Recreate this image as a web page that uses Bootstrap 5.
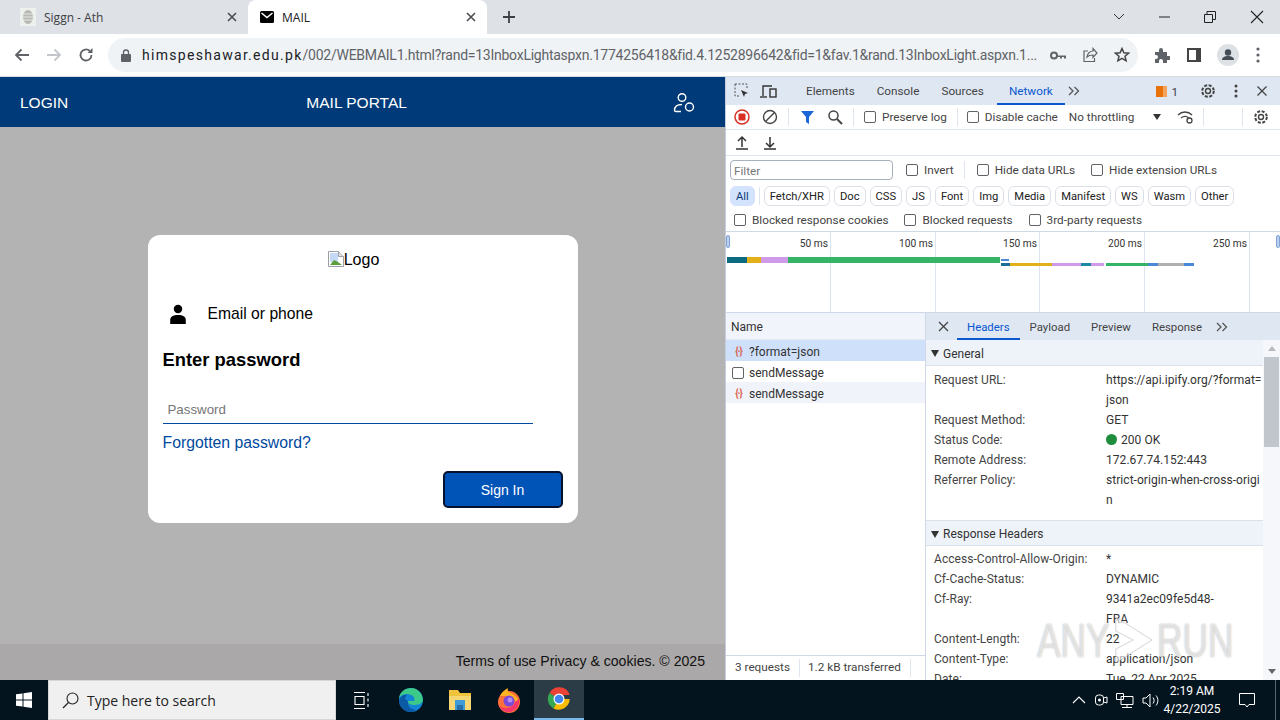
<!DOCTYPE html>
<html lang="en">
<head>
  <meta charset="UTF-8" />
  <meta name="viewport" content="width=device-width, initial-scale=1.0" />
  <title>MAIL</title>
  <link href="https://cdn.jsdelivr.net/npm/bootstrap@5.3.0/dist/css/bootstrap.min.css" rel="stylesheet" />
  <style>
    html, body { height: 720px; overflow: hidden; }
    body { font-family: Roboto, "Liberation Sans", sans-serif; font-size: 11.750px; color: #303942; background: #fff; }
    svg { display: block; flex: none; }
    .ml9 { margin-left: 9px; }
    .ml10 { margin-left: 10px; }
    .ml12 { margin-left: 12px; }
    .ml13 { margin-left: 13px; }
    .ml19 { margin-left: 19px; }
    .lb { margin-left: 6px; padding-top: 2px; }
    .lb-far { margin-left: 11px; padding-top: 2px; }

    /* browser chrome */
    .tabstrip { height: 34px; background: #dee1e6; }
    .br-tab { width: 248px; height: 34px; padding: 0 10px 0 20px; font: 12px "Open Sans", sans-serif; color: #3c4043; flex: none; }
    .br-tab-on { width: 239px; padding-left: 12px; background: #fff; border-radius: 8px 8px 0 0; color: #202124; }
    .plus-ic { margin-left: 15px; }
    .win-btns { width: 167px; padding-right: 16px; }
    .toolbar { height: 43px; background: #fff; border-bottom: 1px solid #dadce0; padding-left: 14px; }
    .omnibox { width: 1030px; height: 34px; margin-left: 14px; background: #f0f3f6; border-radius: 17px; padding: 0 4px 0 13px; font-size: 14px; color: #5f6368; white-space: nowrap; overflow: hidden; }
    .url-host { color: #202124; letter-spacing: 1.300px; }
    .url-text { width: 896px; margin-left: 11px; overflow: hidden; letter-spacing: -.25px; }
    .tool-gap { margin-left: 17px; }

    .work { height: 603px; }

    /* mail page */
    .mailpane { width: 725px; font-family: "Liberation Sans", Arial, sans-serif; background: #b3b3b3; flex: none; }
    .mailhead { height: 50px; background: #003a78; color: #fff; padding: 2px 30px 0 20px; font-size: 15.500px; }
    .mail-title { margin-right: 28px; }
    .mailmain { height: 517px; padding-top: 108px; }
    .logincard { width: 430px; height: 288px; background: #fff; border-radius: 12px; padding: 12px 15px 0; color: #000; }
    .logo-line { height: 24px; font-size: 16px; line-height: 26px; padding-right: 18px; }
    .who { margin-top: 31px; height: 24px; padding-left: 6px; font-size: 15.700px; }
    .who span { margin-left: 21px; }
    .enter-pw { font-size: 18.400px; font-weight: 700; margin: 22px 0 0; line-height: 24px; }
    .pw-input { display: block; width: 370px; height: 30px; margin-top: 22px; padding: 2px 5px 0; border: 0; border-bottom: 1px solid #004a9f; font: 13.300px "Liberation Sans", Arial, sans-serif; outline: 0; }
    .pw-input::placeholder { color: #757575; opacity: 1; }
    .forgot { display: block; margin-top: 10px; font-size: 15.800px; line-height: 18px; color: #004a9f; text-decoration: none; }
    .signin { width: 120px; height: 37px; margin-top: 19px; background: #0054b8; color: #fff; border: 2px solid #04122e; border-radius: 5px; font-size: 14px; padding: 2px 0 0; }
    .mailfoot { height: 36px; background: #aaa8a8; color: #111; font-size: 14.100px; padding-right: 20px; }

    /* devtools */
    .devpane { width: 555px; border-left: 1px solid #c4cede; background: #fff; position: relative; overflow: hidden; }
    .dt-tabs { height: 28px; background: #dfe7f3; color: #444; padding-left: 8px; }
    .dt-elements { margin-left: 29px; }
    .dt-tab { height: 28px; line-height: 29px; margin-right: 22px; }
    .dt-tab-on { color: #0b57d0; border-bottom: 2px solid #0b57d0; margin: 0 3px 0 -9px; padding: 0 12px; }
    .warn-count { margin: 3px 22px 0 4px; }
    .dt-gap { margin-right: 18px; }
    .x-end { margin-right: 12px; }
    .dt-row { height: 25px; border-bottom: 1px solid #dfe5ef; padding-left: 8px; color: #444; white-space: nowrap; }
    .dt-row-b { height: 26px; }
    .dt-sep { width: 1px; height: 18px; background: #dfe5ef; flex: none; }
    .sep-last { margin-left: 38px; }
    .chk { width: 12px; height: 12px; border: 1px solid #5f6368; border-radius: 2px; background: #fff; flex: none; }
    .filter-row { height: 27px; padding-left: 4px; color: #444; }
    .filter-box { width: 163px; height: 20px; border: 1px solid #a8b0bd; border-radius: 4px; padding-left: 3px; line-height: 20px; color: #777; }
    .chip-row { height: 25px; padding-left: 4px; }
    .chip-sep { margin: 0 4px; }
    .chip { height: 20px; line-height: 19px; padding: 0 5px; border: 1px solid #dbe0e8; border-radius: 6px; font-size: 11.200px; color: #222; margin-right: 4px; }
    .chip-on { background: #d3e3fd; border-color: #d3e3fd; color: #0b3a75; margin-right: 0; }
    .block-row { height: 24px; padding-left: 8px; border-bottom: 1px solid #cfd8e6; color: #444; }
    .overview { height: 81px; border-bottom: 1px solid #cfd8e6; position: relative; }
    .tick { position: absolute; top: 0; bottom: 0; width: 1px; background: #dde4ef; }
    .tick span { position: absolute; right: 3px; top: 4px; font-size: 10.200px; white-space: nowrap; color: #333; }
    .grip { position: absolute; top: 3px; width: 4px; height: 13px; background: #bcd0ee; border: 1px solid #7fa2d8; border-radius: 2px; }
    .wf { position: absolute; left: 1px; display: flex; }
    .wf i { display: block; height: 100%; }
    .wf1 { top: 25px; height: 6px; }
    .wf2 { top: 31px; left: 275px; height: 3px; }
    .wf3 { top: 27px; left: 275px; height: 2px; }

    .netgrid { height: 367px; font-size: 12px; }
    .namecol { width: 200px; border-right: 1px solid #cfd8e6; flex: none; }
    .namehead { height: 27px; background: #f1f4fa; padding: 2px 0 0 5px; border-bottom: 1px solid #e3e8f1; color: #333; }
    .namerow { height: 21px; padding: 2px 0 0 6px; gap: 4px; color: #333; }
    .namerow-sel { background: #cfe0fb; }
    .namerow-alt { background: #f0f4fa; }
    .statusbar { height: 25px; border-top: 1px solid #cfd8e6; padding-left: 9px; color: #444; white-space: nowrap; margin-top: auto; font-size: 11.750px; }
    .statusbar .dt-sep { margin: 0 8px 0 9px; }
    .jsonic { color: #d9634c; font-size: 10px; font-weight: 700; width: 13px; text-align: center; line-height: 1; letter-spacing: -1px; }
    .docic { width: 12px; height: 12px; border: 1px solid #5f6368; border-radius: 2px; margin-right: 1px; }

    .detail { width: 354px; overflow: hidden; }
    .det-tabs { height: 27px; background: #dfe7f3; color: #444; padding-left: 12px; font-size: 11.400px; }
    .det-on { margin: 0 10px 0 8px; padding: 0 10px; height: 27px; }
    .det-tab { line-height: 29px; height: 27px; margin-right: 21px; }
    .det-last { margin-right: 14px; }
    .det-body { width: 337px; height: 340px; overflow: hidden; flex: none; }
    .det-scroll { width: 17px; height: 340px; background: #f5f7fb; position: relative; flex: none; }
    .thumb { position: absolute; top: 17px; left: 1px; right: 1px; height: 90px; background: #c1c6cd; }
    .arrow-up { position: absolute; top: 6px; left: 5px; }
    .arrow-dn { position: absolute; bottom: 6px; left: 5px; }
    .sect { height: 26px; background: #eef2f9; border-bottom: 1px solid #d9e0ec; padding: 2px 0 0 5px; gap: 4px; color: #333; }
    .sect-r { border-top: 1px solid #d9e0ec; margin-top: 10px; }
    .kv { padding: 4px 0 0 8px; }
    .kv-b { padding-top: 3px; }
    .kv-row { display: flex; line-height: 20px; letter-spacing: .05px; }
    .kv-row b { font-weight: 400; width: 172px; flex: none; color: #444; }
    .kv-row span { white-space: nowrap; color: #333; }
    .dot { display: inline-block; width: 11px; height: 11px; border-radius: 50%; background: #1e8e3e; margin-right: 4px; vertical-align: -1px; }

    .watermark { position: absolute; left: 311px; top: 540px; display: flex; align-items: center; height: 46px; color: rgba(255,255,255,.6); font: 49px/46px "Liberation Sans", Arial, sans-serif; text-shadow: 0 0 2px rgba(110,110,110,.55); white-space: nowrap; transform: scaleX(.72); transform-origin: left; }

    /* taskbar */
    .taskbar { height: 40px; background: #04141f; color: #fff; }
    .startbtn { width: 48px; }
    .searchbox { width: 288px; height: 40px; background: #f0f0f0; color: #222; font: 14px "Open Sans", sans-serif; padding-left: 13px; gap: 8px; border: 1px solid #d6d6d6; }
    .tb-ic { width: 50px; height: 40px; flex: none; }
    .tb-narrow { width: 48px; }
    .tb-on { background: #2b3c47; border-bottom: 2px solid #76b9ed; }
    .tray { font-size: 12px; line-height: 18px; }
    .clock { width: 60px; margin-left: 2px; text-align: center; }
    .notif { margin: 0 20px 0 17px; }
    .desk-line { width: 1px; height: 40px; background: #5a6670; margin-right: 4px; }
  </style>
</head>
<body>
  <div class="tabstrip d-flex align-items-center">
    <div class="br-tab d-flex align-items-center">
      <svg width="16" height="18" viewBox="0 0 16 18"><rect width="16" height="18" fill="#eef0ee"/><ellipse cx="8" cy="9" rx="5" ry="7" fill="#b6bab2"/><path d="M3 6h10M3 9h10M3 12h10" stroke="#e8eae6"/></svg>
      <span class="ms-2 flex-grow-1">Siggn - Ath</span>
      <svg width="12" height="12" viewBox="0 0 12 12"><path d="M2 2l8 8M10 2l-8 8" stroke="#4a4d51" stroke-width="1.6"/></svg>
    </div>
    <div class="br-tab br-tab-on d-flex align-items-center">
      <svg width="14" height="12" viewBox="0 0 14 12"><rect width="14" height="12" rx="1.5" fill="#000"/><path d="M1.5 2L7 6.5 12.5 2" fill="none" stroke="#fff" stroke-width="1.5"/></svg>
      <span class="ms-2 flex-grow-1">MAIL</span>
      <svg width="12" height="12" viewBox="0 0 12 12"><path d="M2 2l8 8M10 2l-8 8" stroke="#4a4d51" stroke-width="1.6"/></svg>
    </div>
    <svg class="plus-ic" width="14" height="14" viewBox="0 0 14 14"><path d="M7 1v12M1 7h12" stroke="#3c4043" stroke-width="1.8"/></svg>
    <div class="win-btns ms-auto d-flex align-items-center justify-content-between">
      <svg width="12" height="8" viewBox="0 0 12 8"><path d="M1 1l5 5 5-5" fill="none" stroke="#333"/></svg>
      <svg width="11" height="2" viewBox="0 0 11 2"><path d="M0 1h11" stroke="#222"/></svg>
      <svg width="12" height="12" viewBox="0 0 12 12"><path d="M.5 3.5h8v8h-8zM3 3.5V.5h8.500v8H8.500" fill="none" stroke="#222"/></svg>
      <svg width="14" height="14" viewBox="0 0 14 14"><path d="M1 1l12 12M13 1L1 13" stroke="#222" stroke-width="1.1"/></svg>
    </div>
  </div>

  <div class="toolbar d-flex align-items-center">
    <svg width="16" height="14" viewBox="0 0 16 14"><path d="M15 7H2M7.500 1.500L2 7l5.500 5.500" fill="none" stroke="#5f6368" stroke-width="1.800"/></svg>
    <svg class="ms-3" width="16" height="14" viewBox="0 0 16 14"><path d="M1 7h13M8.500 1.500L14 7l-5.500 5.500" fill="none" stroke="#c2c5c9" stroke-width="1.800"/></svg>
    <svg class="ms-3" width="16" height="16" viewBox="0 0 16 16"><path d="M13.500 8a5.500 5.500 0 1 1-1.700-4" fill="none" stroke="#5f6368" stroke-width="1.800"/><path d="M14.500 1v5h-5z" fill="#5f6368"/></svg>
    <div class="omnibox d-flex align-items-center">
      <svg width="10" height="13" viewBox="0 0 10 13"><rect y="5" width="10" height="8" rx="1" fill="#5f6368"/><path d="M2.500 5V3.500a2.500 2.500 0 0 1 5 0V5" fill="none" stroke="#5f6368" stroke-width="1.300"/></svg>
      <div class="url-text"><span class="url-host">himspeshawar.edu.pk</span>/002/WEBMAIL1.html?rand=13InboxLightaspxn.1774256418&amp;fid.4.1252896642&amp;fid=1&amp;fav.1&amp;rand.13InboxLight.aspxn.1...</div>
      <svg class="ms-auto" width="16" height="9" viewBox="0 0 16 9"><circle cx="4" cy="4.500" r="3" fill="none" stroke="#5f6368" stroke-width="2"/><path d="M7 4.500h9v3h-2V6h-2v1.500h-2V6H7z" fill="#5f6368"/></svg>
      <svg class="ms-3" width="16" height="16" viewBox="0 0 16 16"><path d="M6 4H2v10.500h10.500V11M5 10c.5-4 3.500-6 6-6V1.500L15 6l-4 4.500V8c-2.500 0-4.500.5-6 2z" fill="none" stroke="#5f6368" stroke-width="1.200"/></svg>
      <svg class="ms-3 me-1" width="16" height="16" viewBox="0 0 16 16"><path d="M8 1.500l1.900 4.300 4.600.4-3.500 3 1.100 4.600L8 11.400l-4.100 2.400L5 9.200l-3.500-3 4.600-.4z" fill="none" stroke="#444" stroke-width="1.500"/></svg>
    </div>
    <svg class="ms-3" width="16" height="16" viewBox="0 0 16 16"><path d="M1 5h4V3a2 2 0 0 1 4 0v2h4v4h2a2 2 0 0 1 0 4h-2v3H9v-2a2 2 0 0 0-4 0v2H1v-4h1a2 2 0 0 0 0-4H1z" fill="#5f6368"/></svg>
    <svg class="tool-gap" width="14" height="14" viewBox="0 0 14 14"><path d="M1 1h12v12H1z" fill="none" stroke="#444" stroke-width="2"/><path d="M9 1h4v12H9z" fill="#444"/></svg>
    <svg class="ms-3" width="22" height="22" viewBox="0 0 22 22"><circle cx="11" cy="11" r="11" fill="#dee1e6"/><circle cx="11" cy="8.500" r="3.200" fill="#444c56"/><path d="M5 16c0-3 3-4 6-4s6 1 6 4z" fill="#444c56"/></svg>
    <svg class="tool-gap" width="4" height="16" viewBox="0 0 4 16"><circle cx="2" cy="2" r="1.600" fill="#5f6368"/><circle cx="2" cy="8" r="1.600" fill="#5f6368"/><circle cx="2" cy="14" r="1.600" fill="#5f6368"/></svg>
  </div>

  <div class="work d-flex">
    <div class="mailpane">
      <div class="mailhead d-flex align-items-center justify-content-between">
        <span>LOGIN</span>
        <span class="mail-title">MAIL PORTAL</span>
        <svg width="22" height="22" viewBox="0 0 22 22"><circle cx="9" cy="5.500" r="3.800" fill="none" stroke="#fff" stroke-width="1.400"/><path d="M9 12.500C4 12.500 1.500 14.500 1.500 18.500c0 .5.500 1 1.500 1h5" fill="none" stroke="#fff" stroke-width="1.400"/><circle cx="16.500" cy="15" r="4" fill="none" stroke="#fff" stroke-width="1.400"/></svg>
      </div>
      <div class="mailmain d-flex justify-content-center">
        <div class="logincard">
          <div class="logo-line d-flex justify-content-center">
            <svg class="mt-1" width="16" height="16" viewBox="0 0 16 16"><path d="M.5.500h10l5 5v10H.5z" fill="#fff" stroke="#9aa0a6"/><path d="M10.500.500v5h5" fill="#dfe1e5" stroke="#9aa0a6"/><path d="M2 2h8v9H2z" fill="#c5d9f5"/><path d="M2 14l4-5 4 2 4 3z" fill="#5a9e3d"/></svg>
            <span>Logo</span>
          </div>
          <div class="who d-flex align-items-center">
            <svg width="18" height="20" viewBox="0 0 14 18"><circle cx="7" cy="4.500" r="3.800" fill="#000"/><path d="M0 18v-3.500C0 11.500 2.500 10 7 10s7 1.500 7 4.500V18z" fill="#000"/></svg>
            <span>Email or phone</span>
          </div>
          <h1 class="enter-pw">Enter password</h1>
          <input class="pw-input" type="password" placeholder="Password">
          <a class="forgot" href="#">Forgotten password?</a>
          <div class="d-flex justify-content-end">
            <button class="btn signin" type="button">Sign In</button>
          </div>
        </div>
      </div>
      <div class="mailfoot d-flex align-items-center justify-content-end">Terms of use Privacy &amp; cookies. © 2025</div>
    </div>

    <div class="devpane">
      <div class="dt-tabs d-flex align-items-center">
        <svg width="16" height="16" viewBox="0 0 16 16"><path d="M1 1h12v4M1 1v12h4" fill="none" stroke="#555" stroke-dasharray="2 1.500"/><path d="M7 7l7 3-3 1-1 3z" fill="#333"/></svg>
        <svg class="ml10" width="17" height="15" viewBox="0 0 17 15"><path d="M3 12V2h9" fill="none" stroke="#333" stroke-width="1.400"/><path d="M0 13h7" stroke="#333" stroke-width="1.400"/><rect x="10" y="5" width="6" height="8" fill="none" stroke="#333" stroke-width="1.400"/></svg>
        <div class="dt-tab dt-elements">Elements</div>
        <div class="dt-tab">Console</div>
        <div class="dt-tab">Sources</div>
        <div class="dt-tab dt-tab-on">Network</div>
        <svg width="12" height="10" viewBox="0 0 12 10"><path d="M1 1l4 4-4 4M6.500 1l4 4-4 4" fill="none" stroke="#555" stroke-width="1.300"/></svg>
        <svg class="ms-auto" width="11" height="11" viewBox="0 0 11 11"><path d="M0 0h11v11H0z" fill="#e8710a"/><path d="M7 0h4v11H7z" fill="#f5a25d"/></svg>
        <span class="warn-count">1</span>
        <svg class="dt-gap" width="16" height="16" viewBox="0 0 16 16"><circle cx="8" cy="8" r="2.500" fill="none" stroke="#444" stroke-width="1.400"/><circle cx="8" cy="8" r="5.800" fill="none" stroke="#444" stroke-width="2" stroke-dasharray="3 1.550"/></svg>
        <svg class="dt-gap" width="4" height="14" viewBox="0 0 4 14"><circle cx="2" cy="2" r="1.500" fill="#444"/><circle cx="2" cy="7" r="1.500" fill="#444"/><circle cx="2" cy="12" r="1.500" fill="#444"/></svg>
        <svg class="x-end" width="12" height="12" viewBox="0 0 12 12"><path d="M1.500 1.500l9 9M10.500 1.500l-9 9" stroke="#444" stroke-width="1.300"/></svg>
      </div>
      <div class="dt-row d-flex align-items-center">
        <svg width="16" height="16" viewBox="0 0 16 16"><circle cx="8" cy="8" r="7" fill="none" stroke="#d93025" stroke-width="1.500"/><rect x="4.500" y="4.500" width="7" height="7" rx="1" fill="#d93025"/></svg>
        <svg class="ml12" width="16" height="16" viewBox="0 0 16 16"><circle cx="8" cy="8" r="6.500" fill="none" stroke="#444" stroke-width="1.400"/><path d="M3.500 12.500l9-9" stroke="#444" stroke-width="1.400"/></svg>
        <div class="dt-sep ml10"></div>
        <svg class="ml12" width="13" height="13" viewBox="0 0 13 13"><path d="M0 0h13L8 6v7L5 11V6z" fill="#1a66d6"/></svg>
        <svg class="ml13" width="16" height="16" viewBox="0 0 16 16"><circle cx="6.500" cy="6.500" r="4.500" fill="none" stroke="#444" stroke-width="1.500"/><path d="M10 10l5 5" stroke="#444" stroke-width="2"/></svg>
        <div class="dt-sep ml10"></div>
        <div class="chk ml10"></div><span class="lb">Preserve log</span>
        <div class="dt-sep ml10"></div>
        <div class="chk ml9"></div><span class="lb">Disable cache</span>
        <span class="lb-far">No throttling</span>
        <svg class="ml19" width="8" height="6" viewBox="0 0 8 6"><path d="M0 0h8L4 6z" fill="#333"/></svg>
        <svg class="ms-3" width="17" height="14" viewBox="0 0 17 14"><path d="M1 5c4-4 10-4 14 0M4 8c2.500-2 5.500-2 8 0" fill="none" stroke="#444" stroke-width="1.300"/><circle cx="12.500" cy="10.500" r="2.500" fill="none" stroke="#444" stroke-width="1.300"/></svg>
        <div class="dt-sep ml9"></div>
        <div class="dt-sep sep-last"></div>
        <svg class="ml10" width="16" height="16" viewBox="0 0 16 16"><circle cx="8" cy="8" r="2.500" fill="none" stroke="#444" stroke-width="1.400"/><circle cx="8" cy="8" r="5.800" fill="none" stroke="#444" stroke-width="2" stroke-dasharray="3 1.550"/></svg>
      </div>
      <div class="dt-row dt-row-b d-flex align-items-center">
        <svg width="16" height="16" viewBox="0 0 16 16"><path d="M8 12V2M4 6l4-4 4 4M2 14h12" fill="none" stroke="#333" stroke-width="1.500"/></svg>
        <svg class="ml12" width="16" height="16" viewBox="0 0 16 16"><path d="M8 2v10M4 8l4 4 4-4M2 14h12" fill="none" stroke="#333" stroke-width="1.500"/></svg>
      </div>
      <div class="filter-row d-flex align-items-center">
        <div class="filter-box">Filter</div>
        <div class="chk ml13"></div><span class="lb">Invert</span>
        <div class="dt-sep ml10"></div>
        <div class="chk ml12"></div><span class="lb">Hide data URLs</span>
        <div class="chk ms-3"></div><span class="lb">Hide extension URLs</span>
      </div>
      <div class="chip-row d-flex align-items-center">
        <div class="chip chip-on">All</div>
        <div class="dt-sep chip-sep"></div>
        <div class="chip">Fetch/XHR</div><div class="chip">Doc</div><div class="chip">CSS</div><div class="chip">JS</div><div class="chip">Font</div><div class="chip">Img</div><div class="chip">Media</div><div class="chip">Manifest</div><div class="chip">WS</div><div class="chip">Wasm</div><div class="chip">Other</div>
      </div>
      <div class="block-row d-flex align-items-center">
        <div class="chk"></div><span class="lb">Blocked response cookies</span>
        <div class="chk ms-3"></div><span class="lb">Blocked requests</span>
        <div class="chk ms-3"></div><span class="lb">3rd-party requests</span>
      </div>
      <div class="overview">
        <div class="tick" style="left:104px"><span>50 ms</span></div>
        <div class="tick" style="left:209px"><span>100 ms</span></div>
        <div class="tick" style="left:313px"><span>150 ms</span></div>
        <div class="tick" style="left:418px"><span>200 ms</span></div>
        <div class="tick" style="left:523px"><span>250 ms</span></div>
        <div class="grip" style="left:0"></div>
        <div class="grip" style="right:0"></div>
        <div class="wf wf1">
          <i style="width:20px;background:#0b6a80"></i><i style="width:14px;background:#e2b019"></i><i style="width:27px;background:#cf9ae8"></i><i style="width:212px;background:#35b468"></i>
        </div>
        <div class="wf wf3"><i style="width:8px;background:#4a88d8"></i></div>
        <div class="wf wf2">
          <i style="width:9px;background:#1a6f9a"></i><i style="width:42px;background:#e2b019"></i><i style="width:29px;background:#cf9ae8"></i><i style="width:10px;background:#1a8aa0"></i><i style="width:13px;background:#cf9ae8"></i><i style="width:2px"></i><i style="width:42px;background:#35b468"></i><i style="width:10px;background:#4a88d8"></i><i style="width:26px;background:#b0b0b0"></i><i style="width:10px;background:#4a88d8"></i>
        </div>
      </div>

      <div class="netgrid d-flex">
        <div class="namecol d-flex flex-column">
          <div class="namehead d-flex align-items-center">Name</div>
          <div class="namerow namerow-sel d-flex align-items-center"><span class="jsonic">{·}</span>?format=json</div>
          <div class="namerow d-flex align-items-center"><span class="docic"></span>sendMessage</div>
          <div class="namerow namerow-alt d-flex align-items-center"><span class="jsonic">{·}</span>sendMessage</div>
          <div class="statusbar d-flex align-items-center">3 requests<div class="dt-sep"></div>1.2 kB transferred<div class="dt-sep"></div></div>
        </div>
        <div class="detail d-flex flex-column">
          <div class="det-tabs d-flex align-items-center">
            <svg width="11" height="11" viewBox="0 0 11 11"><path d="M1 1l9 9M10 1l-9 9" stroke="#444" stroke-width="1.300"/></svg>
            <div class="dt-tab dt-tab-on det-on">Headers</div>
            <div class="det-tab">Payload</div>
            <div class="det-tab">Preview</div>
            <div class="det-tab det-last">Response</div>
            <svg width="12" height="10" viewBox="0 0 12 10"><path d="M1 1l4 4-4 4M6.500 1l4 4-4 4" fill="none" stroke="#555" stroke-width="1.300"/></svg>
          </div>
          <div class="d-flex">
            <div class="det-body">
              <div class="sect d-flex align-items-center"><svg width="8" height="7" viewBox="0 0 8 7"><path d="M0 0h8L4 7z" fill="#333"/></svg>General</div>
              <div class="kv">
                <div class="kv-row"><b>Request URL:</b><span>https://api.ipify.org/?format=<br>json</span></div>
                <div class="kv-row"><b>Request Method:</b><span>GET</span></div>
                <div class="kv-row"><b>Status Code:</b><span><i class="dot"></i>200 OK</span></div>
                <div class="kv-row"><b>Remote Address:</b><span>172.67.74.152:443</span></div>
                <div class="kv-row"><b>Referrer Policy:</b><span>strict-origin-when-cross-origi<br>n</span></div>
              </div>
              <div class="sect sect-r d-flex align-items-center"><svg width="8" height="7" viewBox="0 0 8 7"><path d="M0 0h8L4 7z" fill="#333"/></svg>Response Headers</div>
              <div class="kv kv-b">
                <div class="kv-row"><b>Access-Control-Allow-Origin:</b><span>*</span></div>
                <div class="kv-row"><b>Cf-Cache-Status:</b><span>DYNAMIC</span></div>
                <div class="kv-row"><b>Cf-Ray:</b><span>9341a2ec09fe5d48-<br>FRA</span></div>
                <div class="kv-row"><b>Content-Length:</b><span>22</span></div>
                <div class="kv-row"><b>Content-Type:</b><span>application/json</span></div>
                <div class="kv-row"><b>Date:</b><span>Tue, 22 Apr 2025</span></div>
              </div>
            </div>
            <div class="det-scroll">
              <svg class="arrow-up" width="8" height="5" viewBox="0 0 8 5"><path d="M0 5l4-5 4 5z" fill="#b4b9c0"/></svg>
              <div class="thumb"></div>
              <svg class="arrow-dn" width="8" height="5" viewBox="0 0 8 5"><path d="M0 0l4 5 4-5z" fill="#666"/></svg>
            </div>
          </div>
        </div>
      </div>
      <div class="watermark">
        <span>ANY</span>
        <svg width="66" height="50" viewBox="0 0 61 50"><path d="M6 2l50 23L6 48V34l24-9L6 16z" fill="rgba(255,255,255,.6)" stroke="rgba(130,130,130,.4)"/></svg>
        <span>RUN</span>
      </div>
    </div>
  </div>

  <div class="taskbar d-flex align-items-center">
    <div class="startbtn d-flex justify-content-center">
      <svg width="16" height="16" viewBox="0 0 16 16"><path d="M0 2.300L6.500 1.400V7.500H0zM7.500 1.200L16 0v7.500H7.500zM0 8.500h6.500v6.100L0 13.700zM7.500 8.500H16V16L7.500 14.800z" fill="#fff"/></svg>
    </div>
    <div class="searchbox d-flex align-items-center">
      <svg width="17" height="17" viewBox="0 0 17 17"><circle cx="10.500" cy="6.500" r="5.500" fill="none" stroke="#222" stroke-width="1.100"/><path d="M6.500 10.500L1 16" stroke="#222" stroke-width="1.300"/></svg>
      <span>Type here to search</span>
    </div>
    <div class="tb-ic d-flex align-items-center justify-content-center">
      <svg width="17" height="17" viewBox="0 0 17 17"><path d="M1 .5h11M1 16.500h11M2 4.500h9v8H2zM15 1v3M15 6.500v3M15 12v3" fill="none" stroke="#fff" stroke-width="1.100"/></svg>
    </div>
    <div class="tb-ic d-flex align-items-center justify-content-center">
      <svg width="26" height="26" viewBox="0 0 26 26"><circle cx="13" cy="13" r="12" fill="#1484d6"/><path d="M25 14c0-7-5-13-12-13C7 1 2 5 1 11c3-4 8-5 12-3 3 1 4 4 3 6h-6c0 3 3 4 6 4 4 0 7-1 9-4z" fill="#3cc98a"/><path d="M10 14c-1 5 3 9 8 9-2 2-4 2-5 2-6 0-11-4-12-10 0-4 4-8 8-7-1 1-2 3-2 4z" fill="#0c59a4"/></svg>
    </div>
    <div class="tb-ic tb-narrow d-flex align-items-center justify-content-center">
      <svg width="24" height="22" viewBox="0 0 24 22"><path d="M1 1h9l2 3h11v5H1z" fill="#f0c33c"/><path d="M1 7h22v14H1z" fill="#f7d774"/><path d="M7 11h10v10H7z" fill="#3f9bd8"/><path d="M9 16h6v5H9z" fill="#2a6ea8"/></svg>
    </div>
    <div class="tb-ic d-flex align-items-center justify-content-center">
      <svg width="24" height="26" viewBox="0 0 24 26"><circle cx="12" cy="15" r="11" fill="#ff7139"/><path d="M3 9c1-3 4-6 8-8-1 3 1 5 4 6 4 2 7 5 7 9L12 9z" fill="#ffb322"/><path d="M22 12c1 6-3 13-10 13-4 0-8-2-10-6 4 3 11 3 14-1 2-2 3-4 6-6z" fill="#f5366b"/><circle cx="12" cy="14" r="5.500" fill="#7b4ad8"/><circle cx="13" cy="13" r="2.500" fill="#b58cf0"/></svg>
    </div>
    <div class="tb-ic tb-on d-flex align-items-center justify-content-center">
      <svg width="24" height="24" viewBox="0 0 24 24"><path d="M12 12L2.500 6A11 11 0 0 1 22.700 8H12z" fill="#ea4335"/><path d="M12 12l-5.500 9.500A11 11 0 0 1 2.500 6z" fill="#34a853"/><path d="M12 12h10.700A11 11 0 0 1 6.500 21.500z" fill="#fbbc05"/><circle cx="12" cy="12" r="5.500" fill="#fff"/><circle cx="12" cy="12" r="4.300" fill="#4285f4"/></svg>
    </div>
    <div class="tray ms-auto d-flex align-items-center">
      <svg width="14" height="8" viewBox="0 0 14 8"><path d="M1 7l6-6 6 6" fill="none" stroke="#fff" stroke-width="1.100"/></svg>
      <svg class="ms-2" width="14" height="16" viewBox="0 0 14 16"><rect x="1.500" y="3" width="8" height="10" rx="3" fill="none" stroke="#fff"/><circle cx="5.500" cy="8" r="1.500" fill="#fff"/><path d="M9.500 6L13 5v6l-3.500-1" fill="none" stroke="#fff"/></svg>
      <svg class="ms-2" width="18" height="15" viewBox="0 0 18 15"><path d="M.5.500h7v6h-7zM5 3.500h12v8H5zM11 11.500v3M6 14.500h10" fill="#04141f" stroke="#fff"/></svg>
      <svg class="ms-2" width="18" height="15" viewBox="0 0 18 15"><path d="M1 5h3l4-4v13l-4-4H1zM11 4.500c1.500 2 1.500 4 0 6M14 2.500c2.500 3 2.500 7 0 10" fill="none" stroke="#fff"/></svg>
      <div class="clock">2:19 AM<br>4/22/2025</div>
      <svg class="notif" width="16" height="16" viewBox="0 0 16 16"><path d="M.5 1.500h15v11H10l-2 2.500-2-2.500H.5z" fill="none" stroke="#fff"/></svg>
      <div class="desk-line"></div>
    </div>
  </div>
</body>
</html>
